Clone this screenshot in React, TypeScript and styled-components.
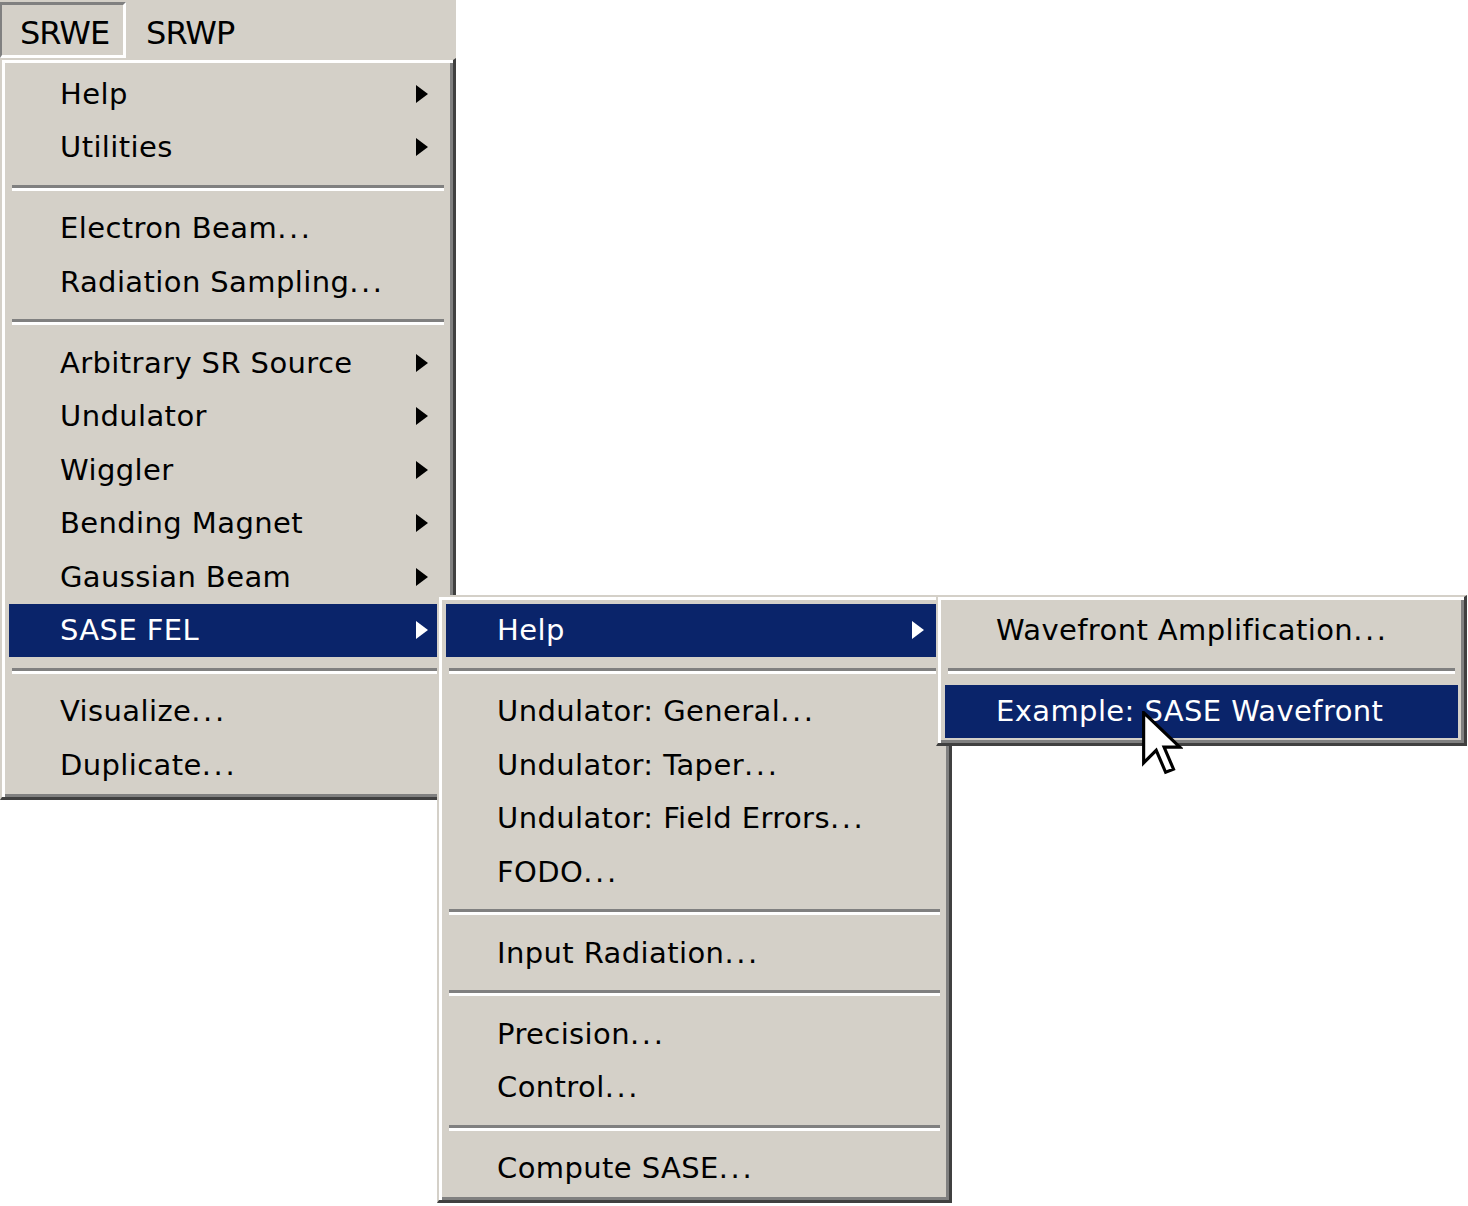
import React from "react";
import styled, { createGlobalStyle } from "styled-components";

/* classic 3D palette ---------------------------------------------- */
const FACE = "#d4d0c8";
const SHADOW = "#808080";
const DARK = "#404040";
const HILITE = "#0a246a";

const ITEM_H = 53.5; // one menu row (px)
const SEP_H = 27.5; // separator row (px)

const GlobalStyle = createGlobalStyle`
  html, body {
    margin: 0;
    padding: 0;
    background: #fff;
  }
  body {
    font-family: "DejaVu Sans", Tahoma, sans-serif;
  }
`;

/* page ------------------------------------------------------------- */
const Desktop = styled.div`
  position: relative;
  width: 1468px;
  height: 1206px;
  overflow: hidden;
  background: #fff;
`;

/* menu bar --------------------------------------------------------- */
const MenuBar = styled.div`
  display: flex;
  width: 456px;
  height: 58px;
  box-sizing: border-box;
  padding-top: 2px;
  background: ${FACE};
`;

const BarItem = styled.div<{ $open?: boolean }>`
  display: flex;
  align-items: center;
  box-sizing: border-box;
  padding: 5px 14px 0 18px;
  border-style: solid;
  border-width: 3px 3px 3px 2px;
  border-color: ${(p) =>
    p.$open ? `${SHADOW} #fff #fff ${SHADOW}` : "transparent"};
  font-size: 32px;
  letter-spacing: -1px;
  color: #000;
`;

/* popup menus ------------------------------------------------------ */
const Popup = styled.div<{ $left: number; $top: number; $width: number }>`
  position: absolute;
  left: ${(p) => p.$left}px;
  top: ${(p) => p.$top}px;
  width: ${(p) => p.$width}px;
  z-index: 2;
  box-sizing: border-box;
  display: flex;
  flex-direction: column;
  padding: 7px 6px 5px 7px;
  background: ${FACE};
  border-style: solid;
  border-width: 2px 3px 3px 2px;
  border-color: ${FACE} ${DARK} ${DARK} ${FACE};
  box-shadow: inset 3px 3px 0 #fff, inset -3px -3px 0 ${SHADOW};
  color: #000;
`;

const Item = styled.div<{ $active?: boolean }>`
  position: relative;
  display: flex;
  align-items: center;
  height: ${ITEM_H}px;
  padding: 0 19px 0 51px;
  font-size: 29px;
  letter-spacing: 0.4px;
  white-space: nowrap;
  background: ${(p) => (p.$active ? HILITE : "transparent")};
  color: ${(p) => (p.$active ? "#fff" : "#000")};
`;

/* Tahoma's dots sit further apart than DejaVu's */
const Dots = styled.span`
  letter-spacing: 2.6px;
`;

const Arrow = styled.span`
  margin-left: auto;
  width: 0;
  height: 0;
  border-left: 12px solid currentColor;
  border-top: 9px solid transparent;
  border-bottom: 9px solid transparent;
`;

const Separator = styled.div`
  display: flex;
  align-items: center;
  height: ${SEP_H}px;
  padding: 0 3px;

  &::before {
    content: "";
    flex: 1;
    height: 3px;
    background: ${SHADOW};
    border-bottom: 3px solid #fff;
  }
`;

const Cursor = styled.svg`
  position: absolute;
  left: 1142px;
  top: 711px;
  z-index: 10;
`;

/* data ------------------------------------------------------------- */
type SubMenu = { left: number; top: number; width: number; entries: Entry[] };
type Entry =
  | "sep"
  | { label: string; arrow?: boolean; active?: boolean; sub?: SubMenu };

const waveMenu: SubMenu = {
  left: 490,
  top: -9,
  width: 531,
  entries: [
    { label: "Wavefront Amplification..." },
    "sep",
    { label: "Example: SASE Wavefront", active: true },
  ],
};

const saseMenu: SubMenu = {
  left: 428,
  top: -9,
  width: 515,
  entries: [
    { label: "Help", arrow: true, active: true, sub: waveMenu },
    "sep",
    { label: "Undulator: General..." },
    { label: "Undulator: Taper..." },
    { label: "Undulator: Field Errors..." },
    { label: "FODO..." },
    "sep",
    { label: "Input Radiation..." },
    "sep",
    { label: "Precision..." },
    { label: "Control..." },
    "sep",
    { label: "Compute SASE..." },
  ],
};

const srweMenu: SubMenu = {
  left: 0,
  top: 58,
  width: 456,
  entries: [
    { label: "Help", arrow: true },
    { label: "Utilities", arrow: true },
    "sep",
    { label: "Electron Beam..." },
    { label: "Radiation Sampling..." },
    "sep",
    { label: "Arbitrary SR Source", arrow: true },
    { label: "Undulator", arrow: true },
    { label: "Wiggler", arrow: true },
    { label: "Bending Magnet", arrow: true },
    { label: "Gaussian Beam", arrow: true },
    { label: "SASE FEL", arrow: true, active: true, sub: saseMenu },
    "sep",
    { label: "Visualize..." },
    { label: "Duplicate..." },
  ],
};

function Label({ text }: { text: string }) {
  if (!text.endsWith("...")) return <span>{text}</span>;
  return (
    <span>
      {text.slice(0, -3)}
      <Dots>...</Dots>
    </span>
  );
}

function Menu({ menu }: { menu: SubMenu }) {
  return (
    <Popup $left={menu.left} $top={menu.top} $width={menu.width}>
      {menu.entries.map((e, i) =>
        e === "sep" ? (
          <Separator key={i} />
        ) : (
          <Item key={i} $active={e.active}>
            <Label text={e.label} />
            {e.arrow && <Arrow />}
            {e.sub && <Menu menu={e.sub} />}
          </Item>
        )
      )}
    </Popup>
  );
}

export default function App() {
  return (
    <>
      <GlobalStyle />
      <Desktop>
        <MenuBar>
          <BarItem $open>SRWE</BarItem>
          <BarItem>SRWP</BarItem>
        </MenuBar>
        <Menu menu={srweMenu} />
        <Cursor width="41" height="66" viewBox="0 0 13 21">
          <path
            d="M0.5 0.5 L0.5 16.5 L4.5 12.5 L7.5 19.5 L10 18.5 L7 11.5 L12 11.5 Z"
            fill="#fff"
            stroke="#000"
            strokeWidth="1"
            strokeLinejoin="miter"
          />
        </Cursor>
      </Desktop>
    </>
  );
}
